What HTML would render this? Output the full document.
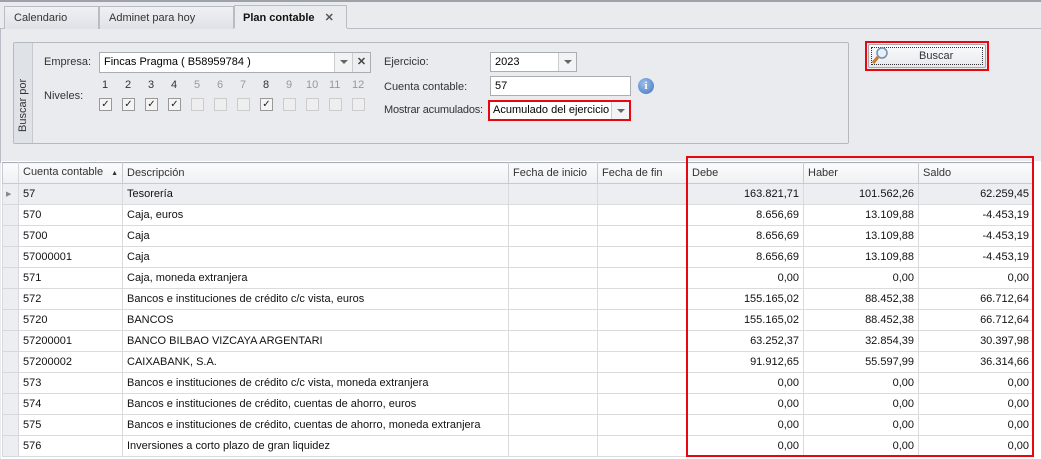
<!DOCTYPE html>
<html><head><meta charset="utf-8"><style>
*{box-sizing:border-box;margin:0;padding:0}
body{width:1041px;height:459px;overflow:hidden;background:#e9ebef;font-family:"Liberation Sans",sans-serif;font-size:11px;color:#000;position:relative}
.a{position:absolute;white-space:nowrap}
.tab{position:absolute;top:6px;height:23px;border:1px solid #b8bcc4;border-bottom:none;background:linear-gradient(#eef0f3,#dfe2e7);padding:5px 9px;color:#333;white-space:nowrap}
.inp{position:absolute;background:#fff;border:1px solid #abadb3;height:20px;padding:3px 4px;white-space:nowrap;overflow:hidden}
.dd{position:absolute;top:0;right:0;width:18px;height:18px;border-left:1px solid #ccc;background:#f2f3f5}
.dd:after{content:"";position:absolute;left:5px;top:7px;border:4px solid transparent;border-top:4px solid #666}
.cb{position:absolute;width:13px;height:13px;border:1px solid #999;background:#f4f4f4;font-size:10px;line-height:11px;text-align:center;color:#222}
.cb.d{border-color:#ccc;background:#eee}
.num{position:absolute;top:79px;color:#333}
.num.d{color:#999}
table{position:absolute;left:2px;top:162px;border-collapse:collapse;background:#fff;table-layout:fixed;width:1031px}
td{height:21px;line-height:19px;border:1px solid #dadbdd;padding:0 4px;overflow:hidden;white-space:nowrap;color:#111}
th{height:21px;line-height:19px;border:1px solid #c7cad0;border-top:1px solid #a9adb5;background:linear-gradient(#fbfbfc,#eef0f3);font-weight:normal;text-align:left;padding:0 4px;color:#333;white-space:nowrap;overflow:hidden}
td.r{text-align:right;padding-right:4px}
tr.sel td{background:#edeef1}
td.ind{background:#edeef1;border-color:#d6d8dc}
</style></head><body>
<div class="a" style="left:0;top:0;width:1041px;height:2px;background:#9da2aa"></div>
<div class="a" style="left:0;top:28px;width:1041px;height:1px;background:#b8bcc4"></div>
<div class="tab" style="left:4px;width:95px">Calendario</div>
<div class="tab" style="left:99px;width:135px">Adminet para hoy</div>
<div class="tab" style="left:234px;top:5px;width:113px;height:24px;background:#e9ebef;color:#111;font-weight:bold;padding:5px 8px">Plan contable <span style="margin-left:7px;color:#555">✕</span></div>
<div class="a" style="left:234px;top:28px;width:113px;height:1px;background:#e9ebef"></div>
<div class="a" style="left:0;top:28px;width:1px;height:135px;background:#b8bcc4"></div>

<div class="a" style="left:13px;top:42px;width:836px;height:102px;border:1px solid #b5b9c0;border-radius:2px"></div>
<div class="a" style="left:14px;top:43px;width:19px;height:100px;background:#dfe2e7;border-right:1px solid #c5c9d0"></div>
<div class="a" style="left:17px;top:132px;transform:rotate(-90deg);transform-origin:0 0;color:#333">Buscar por</div>

<div class="a" style="left:44px;top:56px;color:#333">Empresa:</div>
<div class="inp" style="left:99px;top:52px;width:272px;height:21px">Fincas Pragma ( B58959784 )<div class="dd" style="right:18px;width:18px;height:19px"></div><div style="position:absolute;right:0;top:0;width:18px;height:19px;border-left:1px solid #ccc;background:#eceef1;text-align:center;font-weight:bold;color:#444;line-height:19px">✕</div></div>
<div class="a" style="left:44px;top:90px;color:#333">Niveles:</div>
<div class="num" style="left:102px">1</div><div class="num" style="left:125px">2</div><div class="num" style="left:148px">3</div><div class="num" style="left:171px">4</div>
<div class="num d" style="left:194px">5</div><div class="num d" style="left:217px">6</div><div class="num d" style="left:240px">7</div><div class="num" style="left:263px">8</div>
<div class="num d" style="left:286px">9</div><div class="num d" style="left:306px">10</div><div class="num d" style="left:329px">11</div><div class="num d" style="left:352px">12</div>
<div class="cb" style="left:99px;top:98px">✓</div><div class="cb" style="left:122px;top:98px">✓</div><div class="cb" style="left:145px;top:98px">✓</div><div class="cb" style="left:168px;top:98px">✓</div>
<div class="cb d" style="left:191px;top:98px"></div><div class="cb d" style="left:214px;top:98px"></div><div class="cb d" style="left:237px;top:98px"></div><div class="cb" style="left:260px;top:98px">✓</div>
<div class="cb d" style="left:283px;top:98px"></div><div class="cb d" style="left:306px;top:98px"></div><div class="cb d" style="left:329px;top:98px"></div><div class="cb d" style="left:352px;top:98px"></div>

<div class="a" style="left:384px;top:56px;color:#333">Ejercicio:</div>
<div class="inp" style="left:490px;top:52px;width:87px">2023<div class="dd"></div></div>
<div class="a" style="left:384px;top:81px;color:#333">Cuenta contable:</div>
<div class="inp" style="left:490px;top:76px;width:141px">57</div>
<div class="a" style="left:638px;top:78px;width:16px;height:16px;border-radius:50%;background:radial-gradient(circle at 40% 35%,#9fc0ea,#3f72c0);color:#fff;font-weight:bold;font-size:11px;text-align:center;line-height:16px;font-family:'Liberation Serif',serif">i</div>
<div class="a" style="left:384px;top:104px;color:#333;letter-spacing:-0.2px">Mostrar acumulados:</div>
<div class="inp" style="left:488px;top:100px;width:143px;height:21px;border:2px solid #e8070f;padding:2px 3px">Acumulado del ejercicio<div class="dd" style="height:17px;background:#f2f3f5"></div></div>

<div class="a" style="left:865px;top:41px;width:124px;height:30px;border:2px solid #e8070f"></div>
<div class="a" style="left:868px;top:44px;width:118px;height:24px;border:1px solid #a3a8b0;background:linear-gradient(#fafbfc,#e7e9ed);border-radius:2px"></div>
<div class="a" style="left:871px;top:47px;width:112px;height:18px;border:1px dotted #333"></div>
<svg class="a" style="left:871px;top:46px" width="18" height="20"><circle cx="11" cy="7" r="5" fill="#e6f0fa" stroke="#7a8ea8" stroke-width="1.5"/><line x1="7" y1="11" x2="2" y2="17" stroke="#c87a2a" stroke-width="3"/></svg>
<div class="a" style="left:919px;top:50px;color:#333">Buscar</div>

<div class="a" style="left:1px;top:161px;width:1040px;height:298px;background:#fff"></div>
<table>
<colgroup><col style="width:16px"><col style="width:104px"><col style="width:386px"><col style="width:89px"><col style="width:90px"><col style="width:116px"><col style="width:115px"><col style="width:115px"></colgroup>
<tr><th style="border-right-color:#d6d8dc"></th><th>Cuenta contable <span style="font-size:7px;margin-left:5px">▲</span></th><th>Descripción</th><th>Fecha de inicio</th><th>Fecha de fin</th><th>Debe</th><th>Haber</th><th>Saldo</th></tr>
<tr class="sel"><td class="ind" style="font-size:7px;color:#888;padding:0 3px">▶</td><td>57</td><td>Tesorería</td><td></td><td></td><td class="r">163.821,71</td><td class="r">101.562,26</td><td class="r">62.259,45</td></tr>
<tr><td class="ind"></td><td>570</td><td>Caja, euros</td><td></td><td></td><td class="r">8.656,69</td><td class="r">13.109,88</td><td class="r">-4.453,19</td></tr>
<tr><td class="ind"></td><td>5700</td><td>Caja</td><td></td><td></td><td class="r">8.656,69</td><td class="r">13.109,88</td><td class="r">-4.453,19</td></tr>
<tr><td class="ind"></td><td>57000001</td><td>Caja</td><td></td><td></td><td class="r">8.656,69</td><td class="r">13.109,88</td><td class="r">-4.453,19</td></tr>
<tr><td class="ind"></td><td>571</td><td>Caja, moneda extranjera</td><td></td><td></td><td class="r">0,00</td><td class="r">0,00</td><td class="r">0,00</td></tr>
<tr><td class="ind"></td><td>572</td><td>Bancos e instituciones de crédito c/c vista, euros</td><td></td><td></td><td class="r">155.165,02</td><td class="r">88.452,38</td><td class="r">66.712,64</td></tr>
<tr><td class="ind"></td><td>5720</td><td>BANCOS</td><td></td><td></td><td class="r">155.165,02</td><td class="r">88.452,38</td><td class="r">66.712,64</td></tr>
<tr><td class="ind"></td><td>57200001</td><td>BANCO BILBAO VIZCAYA ARGENTARI</td><td></td><td></td><td class="r">63.252,37</td><td class="r">32.854,39</td><td class="r">30.397,98</td></tr>
<tr><td class="ind"></td><td>57200002</td><td>CAIXABANK, S.A.</td><td></td><td></td><td class="r">91.912,65</td><td class="r">55.597,99</td><td class="r">36.314,66</td></tr>
<tr><td class="ind"></td><td>573</td><td>Bancos e instituciones de crédito c/c vista, moneda extranjera</td><td></td><td></td><td class="r">0,00</td><td class="r">0,00</td><td class="r">0,00</td></tr>
<tr><td class="ind"></td><td>574</td><td>Bancos e instituciones de crédito, cuentas de ahorro, euros</td><td></td><td></td><td class="r">0,00</td><td class="r">0,00</td><td class="r">0,00</td></tr>
<tr><td class="ind"></td><td>575</td><td>Bancos e instituciones de crédito, cuentas de ahorro, moneda extranjera</td><td></td><td></td><td class="r">0,00</td><td class="r">0,00</td><td class="r">0,00</td></tr>
<tr><td class="ind"></td><td>576</td><td>Inversiones a corto plazo de gran liquidez</td><td></td><td></td><td class="r">0,00</td><td class="r">0,00</td><td class="r">0,00</td></tr>
</table>
<div class="a" style="left:686px;top:156px;width:348px;height:301px;border:2px solid #e8070f"></div>
</body></html>
